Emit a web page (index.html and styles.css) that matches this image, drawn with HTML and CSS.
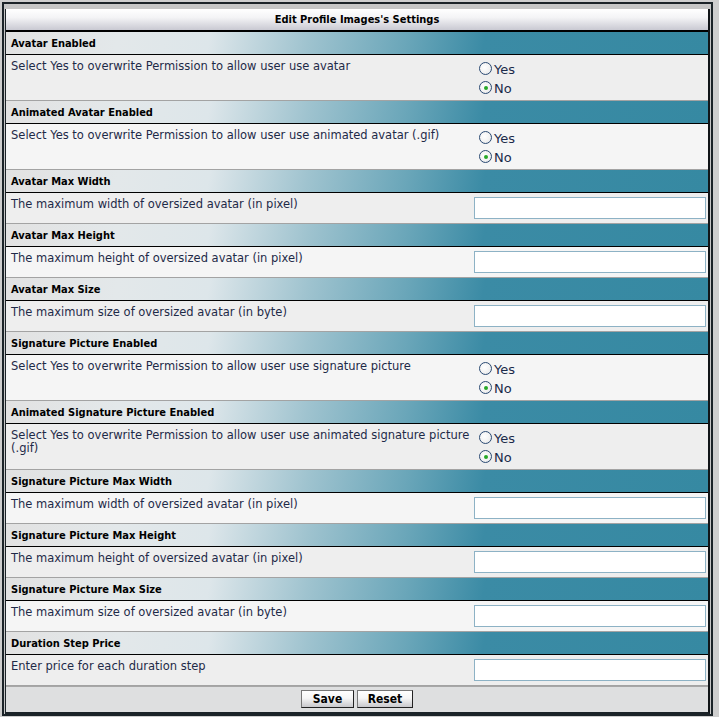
FILE: index.html
```html
<!DOCTYPE html>
<html>
<head>
<meta charset="utf-8">
<title>Edit Profile Images's Settings</title>
<link rel="stylesheet" href="styles.css">
</head>
<body>
<div class="frame">
  <form class="panel">
    <div class="title">Edit Profile Images's Settings</div>

    <div class="head">Avatar Enabled</div>
    <div class="row odd">
      <div class="label">Select Yes to overwrite Permission to allow user use avatar</div>
      <div class="field radios">
        <label class="opt"><input type="radio" name="r1"><span>Yes</span></label>
        <label class="opt"><input type="radio" name="r1" checked><span>No</span></label>
      </div>
    </div>

    <div class="head">Animated Avatar Enabled</div>
    <div class="row even">
      <div class="label">Select Yes to overwrite Permission to allow user use animated avatar (.gif)</div>
      <div class="field radios">
        <label class="opt"><input type="radio" name="r2"><span>Yes</span></label>
        <label class="opt"><input type="radio" name="r2" checked><span>No</span></label>
      </div>
    </div>

    <div class="head">Avatar Max Width</div>
    <div class="row odd">
      <div class="label">The maximum width of oversized avatar (in pixel)</div>
      <div class="field"><input class="text" type="text"></div>
    </div>

    <div class="head">Avatar Max Height</div>
    <div class="row even">
      <div class="label">The maximum height of oversized avatar (in pixel)</div>
      <div class="field"><input class="text" type="text"></div>
    </div>

    <div class="head">Avatar Max Size</div>
    <div class="row odd">
      <div class="label">The maximum size of oversized avatar (in byte)</div>
      <div class="field"><input class="text" type="text"></div>
    </div>

    <div class="head">Signature Picture Enabled</div>
    <div class="row even">
      <div class="label">Select Yes to overwrite Permission to allow user use signature picture</div>
      <div class="field radios">
        <label class="opt"><input type="radio" name="r3"><span>Yes</span></label>
        <label class="opt"><input type="radio" name="r3" checked><span>No</span></label>
      </div>
    </div>

    <div class="head">Animated Signature Picture Enabled</div>
    <div class="row odd">
      <div class="label">Select Yes to overwrite Permission to allow user use animated signature picture (.gif)</div>
      <div class="field radios">
        <label class="opt"><input type="radio" name="r4"><span>Yes</span></label>
        <label class="opt"><input type="radio" name="r4" checked><span>No</span></label>
      </div>
    </div>

    <div class="head">Signature Picture Max Width</div>
    <div class="row even">
      <div class="label">The maximum width of oversized avatar (in pixel)</div>
      <div class="field"><input class="text" type="text"></div>
    </div>

    <div class="head">Signature Picture Max Height</div>
    <div class="row odd">
      <div class="label">The maximum height of oversized avatar (in pixel)</div>
      <div class="field"><input class="text" type="text"></div>
    </div>

    <div class="head">Signature Picture Max Size</div>
    <div class="row even">
      <div class="label">The maximum size of oversized avatar (in byte)</div>
      <div class="field"><input class="text" type="text"></div>
    </div>

    <div class="head">Duration Step Price</div>
    <div class="row odd">
      <div class="label">Enter price for each duration step</div>
      <div class="field"><input class="text" type="text"></div>
    </div>

    <div class="foot">
      <button type="button" class="btn save">Save</button>
      <button type="reset" class="btn reset">Reset</button>
    </div>
  </form>
</div>
</body>
</html>
```
FILE: styles.css
```css
html, body {
  margin: 0;
  padding: 0;
}
body {
  background: #cecece;
  width: 719px;
  height: 717px;
  overflow: hidden;
}
.frame {
  margin: 2px 0 0 2px;
  width: 705px;
  border: 2px solid #1b2328;
  padding: 5px 1px 0 1px;
  background: #c6c6c6;
}
.panel {
  margin: 0;
  border-left: 1px solid #1b2328;
  border-right: 2px solid #111518;
  border-bottom: 2px solid #1b2328;
  background: #eeeeee;
}
.title {
  height: 21px;
  border-bottom: 2px solid #000;
  background: linear-gradient(to bottom, #ffffff 0%, #f4f4f6 40%, #c9c9d2 100%);
  text-align: center;
  font: bold 11px "DejaVu Sans Condensed", "DejaVu Sans", sans-serif;
  font-stretch: condensed;
  line-height: 22px;
  color: #000;
}
.head {
  height: 22px;
  padding-left: 5px;
  border-bottom: 1px solid #000;
  background: linear-gradient(100deg, #e2e2e2 0%, #e3e8ea 16%, #dde6ea 29%, #9fc3cf 43%, #6aa6b9 57%, #3b8ba5 68%, #3689a2 100%);
  font: bold 11px "DejaVu Sans Condensed", "DejaVu Sans", sans-serif;
  font-stretch: condensed;
  line-height: 23px;
  color: #000;
}
.row {
  display: grid;
  grid-template-columns: 1fr 235px;
  border-bottom: 1px solid #a3a3a3;
}
.row.odd { background: #eeeeee; }
.row.even { background: #f5f5f5; }
.label {
  padding: 5px 0 4px 5px;
  font: 11.5px "DejaVu Sans", Verdana, sans-serif;
  line-height: 13px;
  color: #1e2a48;
}
.field {
  padding: 4px 1px 4px 1px;
}
.text {
  display: block;
  box-sizing: border-box;
  width: 232px;
  height: 22px;
  margin: 0;
  border: 1px solid #8db2c5;
  background: #fff;
  padding: 2px 4px;
  font: 11px "DejaVu Sans", sans-serif;
}
.radios {
  padding: 4px 0 3px 6px;
  display: flex;
  flex-direction: column;
}
.opt {
  display: flex;
  align-items: center;
  height: 19px;
  gap: 2px;
  font: 13px "DejaVu Sans", Verdana, sans-serif;
  color: #1b2a4a;
}
.opt span {
  line-height: 19px;
  padding-top: 1px;
}
.opt input {
  appearance: none;
  -webkit-appearance: none;
  margin: 0;
  width: 13px;
  height: 13px;
  border: 1px solid #2b4a73;
  border-radius: 50%;
  background: radial-gradient(circle at 40% 40%, #ffffff 0%, #f2f2f2 55%, #d8dde4 100%);
  box-sizing: border-box;
  position: relative;
  flex: none;
}
.opt input:checked::after {
  content: "";
  position: absolute;
  left: 3.5px;
  top: 3.5px;
  width: 4px;
  height: 4px;
  border-radius: 50%;
  background: #28a828;
}
.foot {
  height: 25px;
  border-top: 1px solid #a7a7a7;
  background: #dedfe0;
  display: flex;
  justify-content: center;
  align-items: flex-start;
  gap: 3px;
}
.btn {
  margin-top: 3px;
  height: 18px;
  padding: 0;
  border: 1px solid #222;
  border-top-color: #777;
  border-left-color: #777;
  background: linear-gradient(to bottom, #ffffff 0%, #f6f6f6 45%, #c8c8cc 100%);
  font: bold 12px "DejaVu Sans Condensed", "DejaVu Sans", sans-serif;
  font-stretch: condensed;
  line-height: 16px;
  color: #000;
}
.btn.save { width: 53px; }
.btn.reset { width: 56px; }
```
